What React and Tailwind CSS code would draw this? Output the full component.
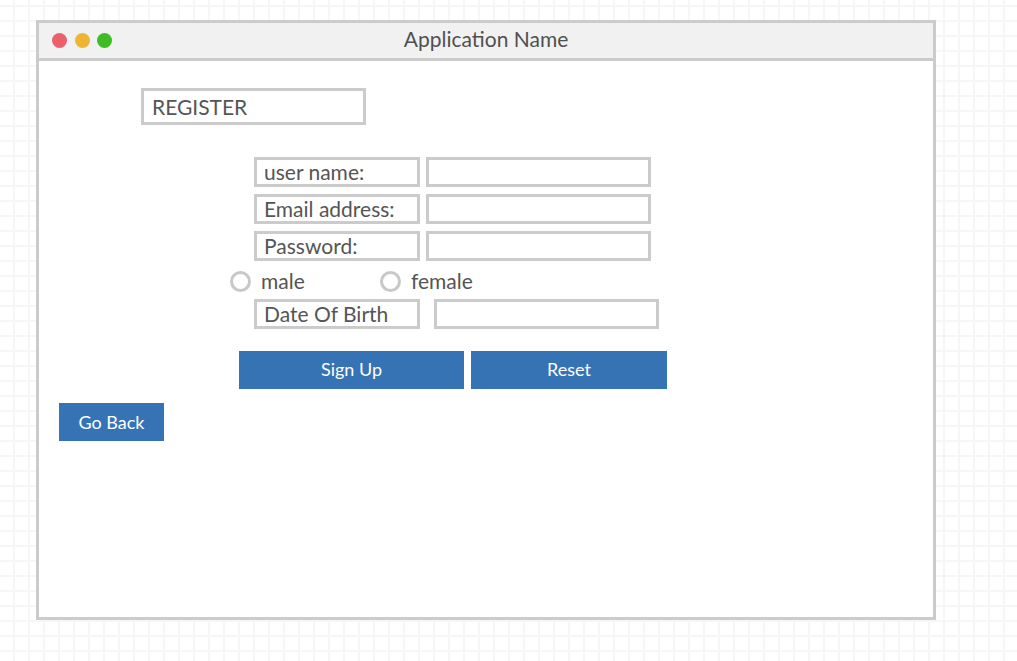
import React from "react";

function Field({ label, inputShift = false }) {
  return (
    <div className="flex items-center">
      <div className="w-[166px] h-[30px] border-[3px] border-[#cbcbcb] flex items-center pl-[7px] pb-[2px] text-[21px] text-[#555555] leading-none">
        {label}
      </div>
      <div
        className={
          (inputShift ? "ml-[14px]" : "ml-[6px]") +
          " w-[225px] h-[30px] border-[3px] border-[#cbcbcb] bg-white"
        }
      />
    </div>
  );
}

function Radio({ label }) {
  return (
    <div className="flex items-center gap-[10px]">
      <div className="w-[21px] h-[21px] rounded-full border-[3px] border-[#c8c8c8] bg-white" />
      <span className="text-[21px] text-[#555555] leading-none pb-[1px]">{label}</span>
    </div>
  );
}

export default function App() {
  return (
    <div
      className="w-[1017px] h-[661px] overflow-hidden bg-white bg-[linear-gradient(to_right,#f6f6f6_2px,transparent_2px),linear-gradient(to_bottom,#f6f6f6_2px,transparent_2px)] bg-[size:15px_15px] bg-[position:13px_5px] pt-[20px] pl-[36px]"
      style={{ fontFamily: "Lato, 'Open Sans', sans-serif" }}
    >
      <div className="w-[900px] h-[600px] border-[3px] border-[#cbcbcb] bg-white flex flex-col">
        {/* Title bar */}
        <div className="relative h-[38px] bg-[#f1f1f1] border-b-[3px] border-[#cbcbcb] flex items-center shrink-0">
          <div className="flex items-center gap-[7.5px] pl-[13px] pb-[1px]">
            <div className="w-[15px] h-[15px] rounded-full bg-[#ec5f6d]" />
            <div className="w-[15px] h-[15px] rounded-full bg-[#edb533]" />
            <div className="w-[15px] h-[15px] rounded-full bg-[#3ebd22]" />
          </div>
          <div className="absolute inset-0 flex items-center justify-center pb-[3px] text-[21px] text-[#505050]">
            Application Name
          </div>
        </div>

        {/* Body */}
        <div className="flex flex-col">
          <div className="ml-[102px] mt-[27px] w-[225px] h-[37px] border-[3px] border-[#cbcbcb] flex items-center pl-[8px] pb-[1px] text-[21px] text-[#555555] leading-none">
            REGISTER
          </div>

          <div className="ml-[215px] mt-[32px] flex flex-col gap-[7px]">
            <Field label="user name:" />
            <Field label="Email address:" />
            <Field label="Password:" />
          </div>

          <div className="ml-[191px] mt-[9px] h-[22px] flex items-center gap-[70px]">
            <div className="w-[80px]">
              <Radio label="male" />
            </div>
            <Radio label="female" />
          </div>

          <div className="ml-[215px] mt-[7px]">
            <Field label="Date Of Birth" inputShift />
          </div>

          <div className="ml-[200px] mt-[22px] flex gap-[7px]">
            <div className="w-[225px] h-[38px] bg-[#3673b5] text-white text-[18px] flex items-center justify-center pb-[1px]">
              Sign Up
            </div>
            <div className="w-[196px] h-[38px] bg-[#3673b5] text-white text-[18px] flex items-center justify-center pb-[1px]">
              Reset
            </div>
          </div>

          <div className="ml-[20px] mt-[14px] w-[105px] h-[38px] bg-[#3673b5] text-white text-[18px] flex items-center justify-center">
            Go Back
          </div>
        </div>
      </div>
    </div>
  );
}
